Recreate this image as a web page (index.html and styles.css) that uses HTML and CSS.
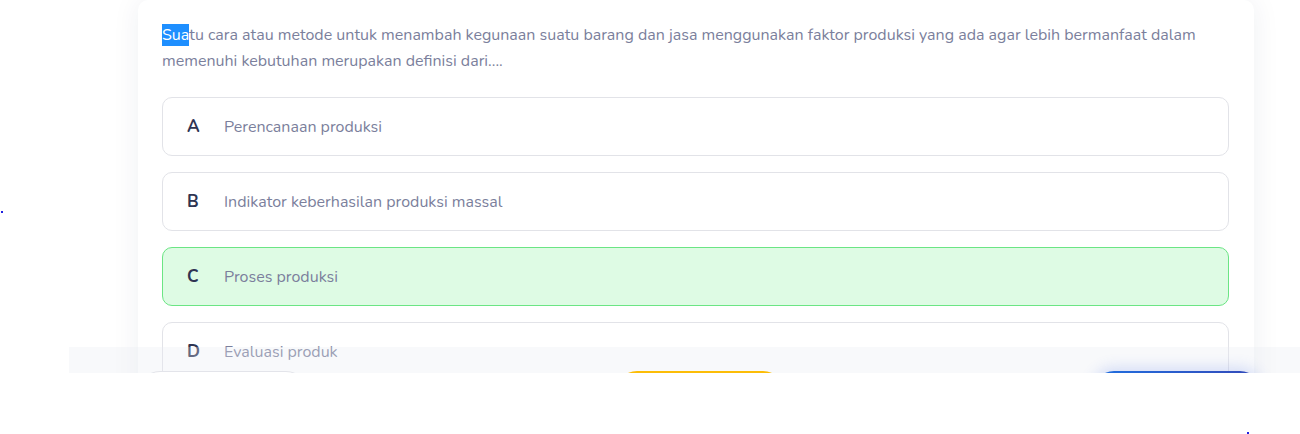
FILE: index.html
```html
<!DOCTYPE html>
<html lang="id">
<head>
<meta charset="utf-8">
<title>Soal</title>
<link rel="stylesheet" href="styles.css">
</head>
<body>
<div class="stage">
  <div class="scroll">
    <section class="card">
      <p class="question"><span class="sel">Sua</span>tu cara atau metode untuk menambah kegunaan suatu barang dan jasa menggunakan faktor produksi yang ada agar lebih bermanfaat dalam memenuhi kebutuhan merupakan definisi dari....</p>
      <div class="options">
        <div class="option"><span class="letter">A</span><span class="label">Perencanaan produksi</span></div>
        <div class="option"><span class="letter">B</span><span class="label">Indikator keberhasilan produksi massal</span></div>
        <div class="option selected"><span class="letter">C</span><span class="label">Proses produksi</span></div>
        <div class="option"><span class="letter">D</span><span class="label">Evaluasi produk</span></div>
      </div>
    </section>
  </div>
  <div class="footer">
    <div class="footer-row">
      <button class="btn btn-outline"></button>
      <button class="btn btn-yellow"></button>
      <button class="btn btn-blue"></button>
    </div>
  </div>
  <span class="dot dot-left"></span>
  <span class="dot dot-right"></span>
</div>
</body>
</html>
```
FILE: styles.css
```css
* { box-sizing: border-box; }
html, body { margin: 0; padding: 0; background: #ffffff; }
body {
  font-family: "Nunito", "Lato", "Noto Sans", sans-serif;
  width: 1300px;
  height: 434px;
  overflow: hidden;
}
.stage {
  position: relative;
  width: 1300px;
  height: 434px;
}
.scroll {
  height: 373px;
  overflow: hidden;
  padding-left: 138px;
}
.card {
  width: 1116px;
  background: #ffffff;
  border-radius: 10px 10px 0 0;
  box-shadow: 0 0 28px rgba(30, 40, 90, 0.07);
  padding: 22px 25px 40px 24px;
  min-height: 420px;
}
.question {
  margin: 0;
  font-size: 16px;
  line-height: 26px;
  color: #7b7f9c;
}
.sel {
  background: #1e8fff;
  color: #ffffff;
}
.options {
  margin-top: 23px;
  display: flex;
  flex-direction: column;
  gap: 16px;
}
.option {
  display: flex;
  align-items: center;
  height: 59px;
  border: 1px solid #e2e3e8;
  border-radius: 10px;
  padding-left: 24px;
}
.option.selected {
  background: #defbe4;
  border-color: #6be584;
}
.letter {
  width: 37px;
  font-size: 17px;
  font-weight: 700;
  color: #2f3452;
}
.label {
  font-size: 16px;
  color: #7b7f9c;
}
.footer {
  position: absolute;
  left: 69px;
  right: 0;
  top: 347px;
  height: 26px;
  background: rgba(232, 235, 241, 0.3);
  overflow: hidden;
}
.footer-row {
  display: flex;
  justify-content: space-between;
  padding: 24px 38px 0 69px;
}
.btn {
  width: 170px;
  height: 44px;
  border-radius: 22px;
  border: none;
  padding: 0;
}
.btn-outline {
  background: #ffffff;
  border: 1px solid #e3e4ea;
}
.btn-yellow {
  background: #fcbd07;
}
.btn-blue {
  background: linear-gradient(90deg, #1f6fe0, #3449b8);
  box-shadow: 0 -4px 14px rgba(60, 100, 230, 0.18);
}
.dot {
  position: absolute;
  width: 2px;
  height: 2px;
  background: #2020e0;
}
.dot-left { left: 1px; top: 211px; }
.dot-right { left: 1247px; top: 432px; }
```
